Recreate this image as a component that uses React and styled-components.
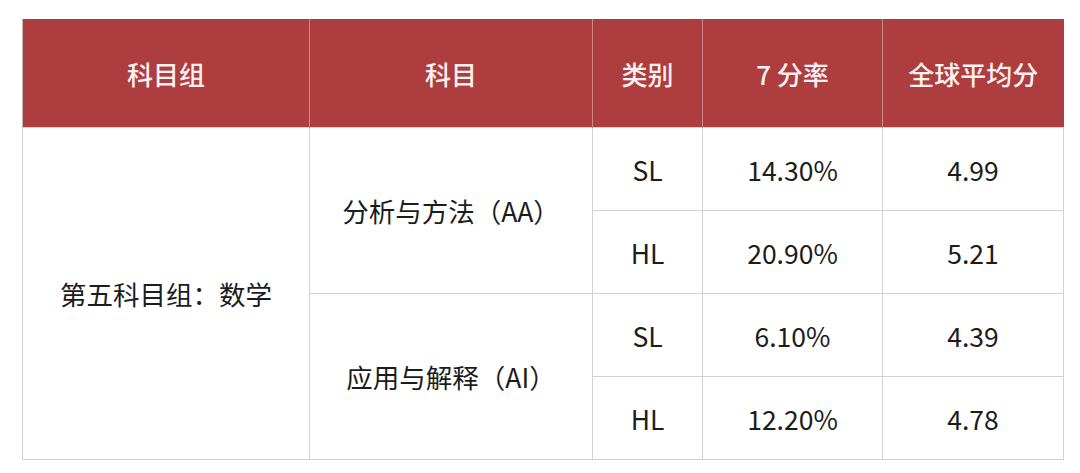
import React from "react";
import styled, { createGlobalStyle } from "styled-components";

const GlobalStyle = createGlobalStyle`
  html, body {
    margin: 0;
    padding: 0;
    background: #ffffff;
  }
  body {
    font-family: "Noto Sans CJK SC", "Noto Sans", sans-serif;
  }
`;

const Page = styled.div`
  width: 1080px;
  height: 473px;
  padding: 19px 0 0 22px;
  box-sizing: border-box;
`;

const Table = styled.table`
  width: 1041px;
  table-layout: fixed;
  border-collapse: collapse;
  font-size: 26.5px;
  color: #1c1c1c;
`;

const HeadCell = styled.th`
  height: 108px;
  padding: 0;
  background: #ad3d3e;
  color: #fbf1f0;
  font-size: 26px;
  font-weight: 500;
  text-align: center;
  border-left: 1px solid #c98a8a;
  &:first-child {
    border-left: 1px solid #c8b3b3;
  }
`;

const Cell = styled.td`
  height: 82px;
  padding: 0;
  text-align: center;
  border: 1px solid #d2d2d2;
`;

const rows = [
  { group: "第五科目组：数学", subject: "分析与方法（AA）", level: "SL", rate: "14.30%", avg: "4.99" },
  { level: "HL", rate: "20.90%", avg: "5.21" },
  { subject: "应用与解释（AI）", level: "SL", rate: "6.10%", avg: "4.39" },
  { level: "HL", rate: "12.20%", avg: "4.78" },
];

export default function App() {
  return (
    <Page>
      <GlobalStyle />
      <Table>
        <colgroup>
          <col style={{ width: 287 }} />
          <col style={{ width: 283 }} />
          <col style={{ width: 110 }} />
          <col style={{ width: 180 }} />
          <col style={{ width: 181 }} />
        </colgroup>
        <thead>
          <tr>
            <HeadCell>科目组</HeadCell>
            <HeadCell>科目</HeadCell>
            <HeadCell>类别</HeadCell>
            <HeadCell>7 分率</HeadCell>
            <HeadCell>全球平均分</HeadCell>
          </tr>
        </thead>
        <tbody>
          {rows.map((r, i) => (
            <tr key={i}>
              {r.group && <Cell rowSpan={4}>{r.group}</Cell>}
              {r.subject && <Cell rowSpan={2}>{r.subject}</Cell>}
              <Cell>{r.level}</Cell>
              <Cell>{r.rate}</Cell>
              <Cell>{r.avg}</Cell>
            </tr>
          ))}
        </tbody>
      </Table>
    </Page>
  );
}
